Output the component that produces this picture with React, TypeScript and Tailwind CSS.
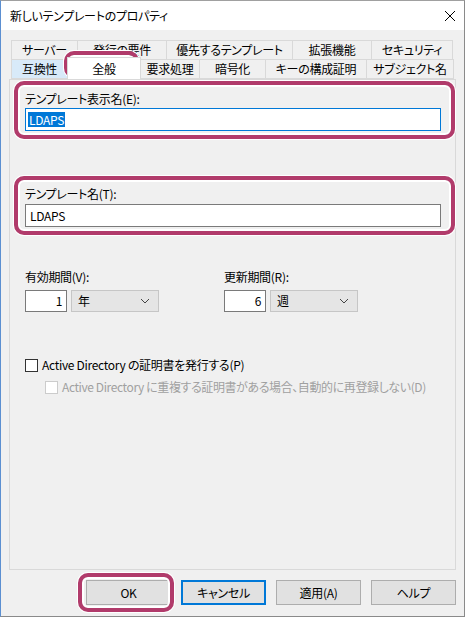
import React from "react";

function Tab({ label, w, hot }: { label: string; w: string; hot?: boolean }) {
  return (
    <div
      className={`${w} h-full flex items-center justify-center border border-[#d9d9d9] -ml-px first:ml-0 text-[12px] text-black whitespace-nowrap ${
        hot ? "bg-[#d8eaf9] border-[#c3dcf3]" : "bg-[#f0f0f0]"
      }`}
    >
      {label}
    </div>
  );
}

function Chevron() {
  return (
    <svg width="10" height="6" viewBox="0 0 10 6" className="shrink-0">
      <path d="M1 1 L5 5 L9 1" fill="none" stroke="#444" strokeWidth="1" />
    </svg>
  );
}

function Highlight({ className }: { className: string }) {
  return (
    <div
      className={`absolute pointer-events-none border-[4px] border-[#b13b6b] rounded-[10px] shadow-[inset_0_0_0_2px_#ffffff,0_0_0_1px_#ffffff] ${className}`}
    />
  );
}

function Period({ label, num, unit }: { label: string; num: string; unit: string }) {
  return (
    <div className="flex flex-col">
      <div className="h-[16px] leading-[16px] text-[12px] text-black">{label}</div>
      <div className="flex gap-[4px] mt-[5px]">
        <div className="w-[42px] h-[22px] bg-white border border-[#7a7a7a] flex items-center justify-end pr-[4px] text-[12px]">
          {num}
        </div>
        <div className="w-[88px] h-[22px] bg-[#e5e5e5] border border-[#c6c6c6] flex items-center justify-between pl-[6px] pr-[8px] text-[12px]">
          <span>{unit}</span>
          <Chevron />
        </div>
      </div>
    </div>
  );
}

function Button({ label, primary }: { label: string; primary?: boolean }) {
  return (
    <div
      className={`w-[85px] h-[25px] bg-[#e1e1e1] flex items-center justify-center text-[12px] text-black ${
        primary ? "border-2 border-[#0078d7]" : "border border-[#adadad]"
      }`}
    >
      {label}
    </div>
  );
}

export default function App() {
  return (
    <div className="relative w-[465px] h-[617px] bg-[#f0f0f0] border-l border-l-[#5b8fd1] border-r border-r-[#8a8a8a] border-b border-b-[#8a8a8a] border-t border-t-[#a0a0a0] flex flex-col overflow-hidden font-['Noto_Sans_CJK_JP','Noto_Sans',sans-serif] [font-feature-settings:'palt'] tracking-[-0.3px]">
      {/* title bar */}
      <div className="h-[29px] bg-white flex items-center justify-between pl-[9px] pr-[8px] shrink-0">
        <span className="text-[12px] text-black">新しいテンプレートのプロパティ</span>
        <svg width="12" height="12" viewBox="0 0 12 12">
          <path d="M1 1 L11 11 M11 1 L1 11" stroke="#000" strokeWidth="1" />
        </svg>
      </div>

      {/* body */}
      <div className="flex flex-col pl-[8px] pr-[8px] pt-[10px]">
        {/* tabs */}
        <div className="flex flex-col ml-[2px] mr-[1px]">
          <div className="flex h-[20px]">
            <Tab label="サーバー" w="w-[67px]" />
            <Tab label="発行の要件" w="w-[90px]" />
            <Tab label="優先するテンプレート" w="w-[127px]" />
            <Tab label="拡張機能" w="w-[80px]" />
            <Tab label="セキュリティ" w="w-[82px]" />
          </div>
          <div className="flex h-[20px] -mt-px relative">
            <Tab label="互換性" w="w-[57px]" hot />
            <div className="w-[74px] h-[22px] -mt-[2px] -ml-px bg-white border border-[#d9d9d9] border-b-0 flex items-center justify-center text-[12px] relative z-10">
              全般
            </div>
            <Tab label="要求処理" w="w-[60px]" />
            <Tab label="暗号化" w="w-[67px]" />
            <Tab label="キーの構成証明" w="w-[102px]" />
            <Tab label="サブジェクト名" w="w-[88px]" />
            <Highlight className="left-[53px] -top-[8px] w-[75px] h-[27px]" />
          </div>
        </div>

        {/* panel */}
        <div className="h-[491px] border border-[#d9d9d9] bg-[#f0f0f0] flex flex-col px-[15px] pt-[11px] relative">
          {/* display name */}
          <div className="relative flex flex-col">
            <div className="h-[16px] leading-[16px] text-[12px]">テンプレート表示名(E):</div>
            <div className="mt-[1px] w-[416px] h-[23px] bg-white border border-[#0078d7] flex items-center pl-[2px]">
              <span className="bg-[#0078d7] text-white text-[12px] leading-[15px] px-px">LDAPS</span>
            </div>
            <Highlight className="-left-[11px] -top-[10px] w-[441px] h-[58px]" />
          </div>

          {/* template name */}
          <div className="relative flex flex-col mt-[55px]">
            <div className="h-[16px] leading-[16px] text-[12px]">テンプレート名(T):</div>
            <div className="mt-[2px] w-[416px] h-[23px] bg-white border border-[#7a7a7a] flex items-center pl-[4px] text-[12px]">
              LDAPS
            </div>
            <Highlight className="-left-[11px] -top-[10px] w-[441px] h-[59px]" />
          </div>

          {/* periods */}
          <div className="flex gap-[65px] mt-[42px]">
            <Period label="有効期間(V):" num="1" unit="年" />
            <Period label="更新期間(R):" num="6" unit="週" />
          </div>

          {/* checkboxes */}
          <div className="flex items-center gap-[4px] mt-[45px] h-[16px]">
            <div className="w-[13px] h-[13px] bg-white border border-[#333]" />
            <span className="text-[12px] text-black whitespace-nowrap">Active Directory の証明書を発行する(P)</span>
          </div>
          <div className="flex items-center gap-[4px] mt-[6px] ml-[20px] h-[16px]">
            <div className="w-[13px] h-[13px] bg-white border border-[#cccccc]" />
            <span className="text-[12px] text-[#a0a0a0] whitespace-nowrap tracking-[-0.4px]">
              Active Directory に重複する証明書がある場合、自動的に再登録しない(D)
            </span>
          </div>
        </div>

        {/* buttons */}
        <div className="flex justify-end gap-[10px] mt-[10px]">
          <div className="relative">
            <Button label="OK" />
            <Highlight className="-left-[8px] -top-[7px] w-[96px] h-[39px]" />
          </div>
          <Button label="キャンセル" primary />
          <Button label="適用(A)" />
          <Button label="ヘルプ" />
        </div>
      </div>
    </div>
  );
}
